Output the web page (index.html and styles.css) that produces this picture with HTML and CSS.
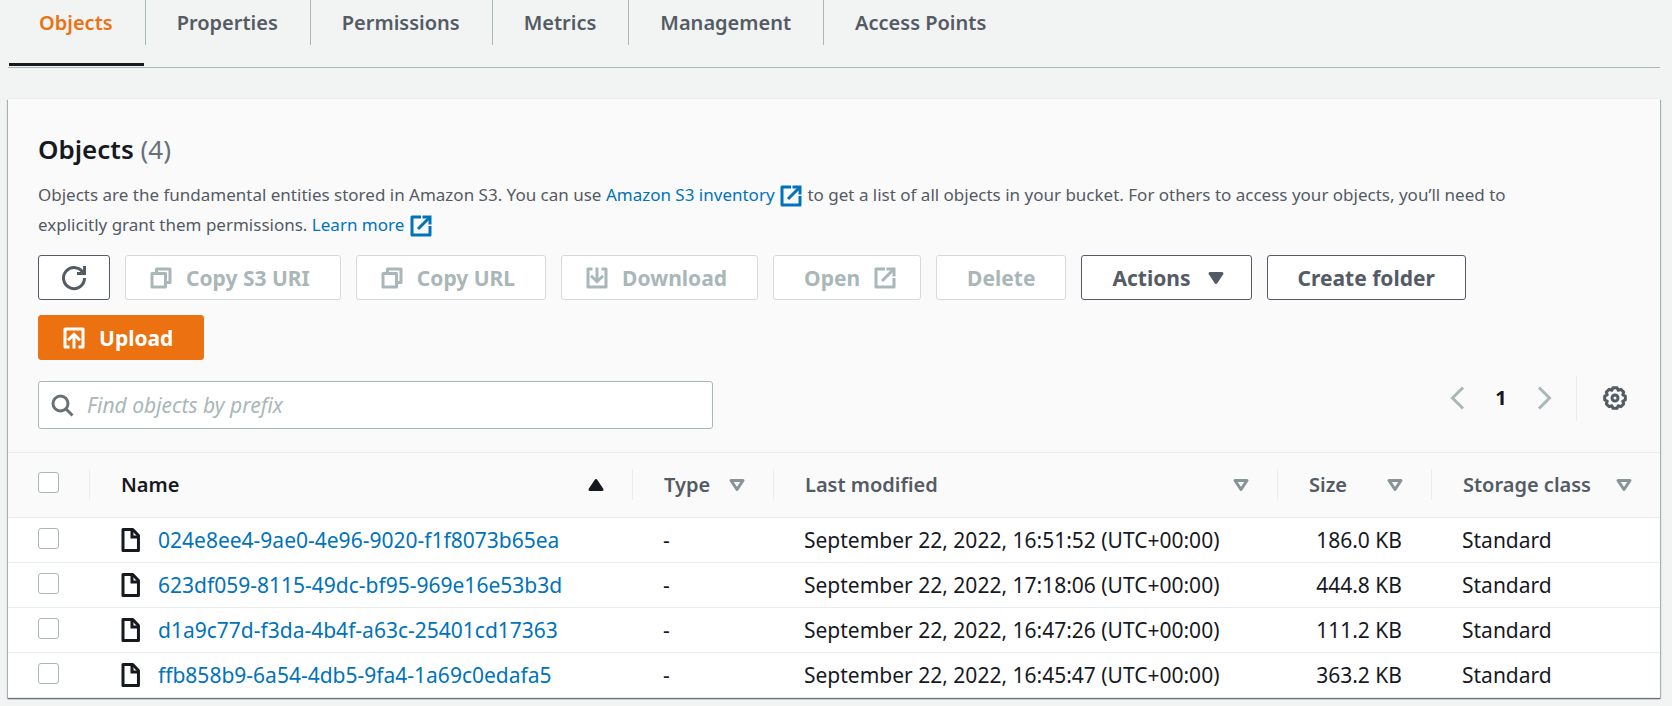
FILE: index.html
```html
<!DOCTYPE html>
<html lang="en">
<head>
<meta charset="utf-8">
<title>Objects</title>
<link rel="stylesheet" href="styles.css">
</head>
<body>
<svg class="sprite" aria-hidden="true">
  <symbol id="external" viewBox="0 0 16 16"><path d="M10 2h4v4" stroke-linecap="square"/><path d="M6 10l8-8"/><path d="M14 9.05V14H2V2h5" stroke-linejoin="round" stroke-linecap="square"/></symbol>
  <symbol id="copy" viewBox="0 0 16 16"><path d="M2 5h9v9H2z" stroke-linejoin="round"/><path d="M5 5V2h9v9h-3" stroke-linejoin="round"/></symbol>
  <symbol id="file" viewBox="0 0 16 16"><path d="M2 1h6.500L12.300 5V15H2z" stroke-linejoin="round"/><path d="M8 1v5h4.500"/></symbol>
  <symbol id="hollow" viewBox="0 0 16 16"><path d="M4 5h8l-4 6z" stroke-linejoin="round"/></symbol>
</svg>

<nav class="tabs" aria-label="Bucket">
  <a class="tab tab-active" href="#objects" aria-current="page"><span>Objects</span></a>
  <a class="tab" href="#properties"><span>Properties</span></a>
  <a class="tab" href="#permissions"><span>Permissions</span></a>
  <a class="tab" href="#metrics"><span>Metrics</span></a>
  <a class="tab" href="#management"><span>Management</span></a>
  <a class="tab" href="#access-points"><span>Access Points</span></a>
</nav>

<main class="card">
  <header class="card-header">
    <h2 class="title">Objects <span class="count">(4)</span></h2>
    <p class="description">Objects are the fundamental entities stored in Amazon S3. You can use <a href="#inventory">Amazon S3 inventory <svg class="icon"><use href="#external"/></svg></a> to get a list of all objects in your bucket. For others to access your objects, you’ll need to explicitly grant them permissions. <a href="#learn">Learn more <svg class="icon"><use href="#external"/></svg></a></p>
    <div class="actions">
      <button class="button button-icon" type="button" aria-label="Refresh"><svg class="icon" viewBox="0 0 16 16"><path d="M10 5h5V0"/><path d="M15 8a7 7 0 1 1-.7-3"/></svg></button>
      <button class="button" type="button" disabled><svg class="icon"><use href="#copy"/></svg>Copy S3 URI</button>
      <button class="button" type="button" disabled><svg class="icon"><use href="#copy"/></svg>Copy URL</button>
      <button class="button" type="button" disabled><svg class="icon" viewBox="0 0 16 16"><path d="M4 2H2v12h12V2h-2" stroke-linejoin="round" stroke-linecap="square"/><path d="M8 1v9M4 6.5l4 4 4-4"/></svg>Download</button>
      <button class="button" type="button" disabled>Open<svg class="icon icon-end"><use href="#external"/></svg></button>
      <button class="button" type="button" disabled>Delete</button>
      <button class="button" type="button">Actions<svg class="icon icon-end icon-solid" viewBox="0 0 16 16"><path d="M4 5h8l-4 6z" stroke-linejoin="round"/></svg></button>
      <button class="button" type="button">Create folder</button>
      <button class="button button-primary" type="button"><svg class="icon" viewBox="0 0 16 16"><path d="M5 14H2V2h12v12h-3" stroke-linejoin="round"/><path d="M8 15V6M4 9.500l4-4 4 4"/></svg>Upload</button>
    </div>
    <div class="tools">
      <label class="search">
        <svg class="icon" viewBox="0 0 16 16"><circle cx="7" cy="7" r="5"/><path d="M15 15l-4.500-4.500"/></svg>
        <input type="search" placeholder="Find objects by prefix" aria-label="Find objects by prefix">
      </label>
      <div class="pager">
        <button class="pager-button" type="button" disabled aria-label="Previous page"><svg class="icon" viewBox="0 0 16 16"><path d="M12 1L5 8l7 7"/></svg></button>
        <button class="pager-button page" type="button" aria-current="page">1</button>
        <button class="pager-button" type="button" disabled aria-label="Next page"><svg class="icon" viewBox="0 0 16 16"><path d="M4 1l7 7-7 7"/></svg></button>
        <div class="settings">
          <button class="pager-button gear" type="button" aria-label="Preferences"><svg class="icon" viewBox="0 0 16 16"><path d="M14.870 6.660V9.340L13.170 10.140L13.800 11.910L11.910 13.800L10.140 13.170L9.340 14.870H6.660L5.860 13.170L4.090 13.800L2.200 11.910L2.830 10.140L1.130 9.340V6.660L2.830 5.860L2.200 4.090L4.090 2.200L5.860 2.830L6.660 1.130H9.340L10.140 2.830L11.910 2.200L13.800 4.090L13.170 5.860z" stroke-linejoin="round"/><circle cx="8" cy="8" r="2"/></svg></button>
        </div>
      </div>
    </div>
  </header>

  <table class="objects">
    <colgroup><col class="col-check"><col><col class="col-type"><col class="col-date"><col class="col-size"><col class="col-class"></colgroup>
    <thead>
      <tr>
        <th scope="col"><div class="head head-check"><input type="checkbox" aria-label="Select all objects"></div></th>
        <th scope="col" class="sorted" aria-sort="ascending"><div class="head">Name<svg class="icon icon-solid" viewBox="0 0 16 16"><path d="M4 11h8L8 5z" stroke-linejoin="round"/></svg></div></th>
        <th scope="col"><div class="head">Type<svg class="icon"><use href="#hollow"/></svg></div></th>
        <th scope="col"><div class="head">Last modified<svg class="icon"><use href="#hollow"/></svg></div></th>
        <th scope="col"><div class="head">Size<svg class="icon"><use href="#hollow"/></svg></div></th>
        <th scope="col"><div class="head">Storage class<svg class="icon"><use href="#hollow"/></svg></div></th>
      </tr>
    </thead>
    <tbody>
      <tr>
        <td class="check"><input type="checkbox" aria-label="Select 024e8ee4-9ae0-4e96-9020-f1f8073b65ea"></td>
        <td><div class="name"><svg class="icon"><use href="#file"/></svg><a href="#o1">024e8ee4-9ae0-4e96-9020-f1f8073b65ea</a></div></td>
        <td>-</td><td>September 22, 2022, 16:51:52 (UTC+00:00)</td><td class="size">186.0 KB</td><td>Standard</td>
      </tr>
      <tr>
        <td class="check"><input type="checkbox" aria-label="Select 623df059-8115-49dc-bf95-969e16e53b3d"></td>
        <td><div class="name"><svg class="icon"><use href="#file"/></svg><a href="#o2">623df059-8115-49dc-bf95-969e16e53b3d</a></div></td>
        <td>-</td><td>September 22, 2022, 17:18:06 (UTC+00:00)</td><td class="size">444.8 KB</td><td>Standard</td>
      </tr>
      <tr>
        <td class="check"><input type="checkbox" aria-label="Select d1a9c77d-f3da-4b4f-a63c-25401cd17363"></td>
        <td><div class="name"><svg class="icon"><use href="#file"/></svg><a href="#o3">d1a9c77d-f3da-4b4f-a63c-25401cd17363</a></div></td>
        <td>-</td><td>September 22, 2022, 16:47:26 (UTC+00:00)</td><td class="size">111.2 KB</td><td>Standard</td>
      </tr>
      <tr>
        <td class="check"><input type="checkbox" aria-label="Select ffb858b9-6a54-4db5-9fa4-1a69c0edafa5"></td>
        <td><div class="name"><svg class="icon"><use href="#file"/></svg><a href="#o4">ffb858b9-6a54-4db5-9fa4-1a69c0edafa5</a></div></td>
        <td>-</td><td>September 22, 2022, 16:45:47 (UTC+00:00)</td><td class="size">363.2 KB</td><td>Standard</td>
      </tr>
    </tbody>
  </table>
</main>
</body>
</html>
```
FILE: styles.css
```css
* {
  box-sizing: border-box;
}

body {
  margin: 0;
  padding: 0 12px 8px 8px;
  background: #f2f3f3;
  color: #16191f;
  font-family: "Noto Sans", "Open Sans", sans-serif;
  font-size: 21px;
  line-height: 30px;
}

a {
  color: #0073bb;
  text-decoration: none;
}

button,
input {
  font: inherit;
  color: inherit;
}

.sprite {
  display: none;
}

.icon {
  flex: none;
  width: 24px;
  height: 24px;
  overflow: visible;
  fill: none;
  stroke: currentColor;
  stroke-width: 2;
}

.icon-solid {
  fill: currentColor;
}

/* Tabs */
.tabs {
  display: flex;
  height: 68px;
  border-bottom: 1px solid #aab7b8;
}

.tab {
  height: 67px;
  color: #545b64;
  font-size: 20px;
  font-weight: 600;
}

.tab span {
  display: block;
  height: 45px;
  padding: 8px 32px 0 31px;
  border-right: 1px solid #aab7b8;
}

.tab:last-child span {
  border-right: 0;
}

.tab-active {
  color: #ec7211;
  background: linear-gradient(#16191f, #16191f) 1px 63px / calc(100% - 3px) 3px no-repeat;
}

/* Card */
.card {
  margin-top: 31px;
  background: #fff;
  box-shadow: 0 1px 1px 0 #687078, 1px 1px 1px 0 #b4bcbd, -1px 1px 1px 0 #b4bcbd, 0 -1px 0 0 #eaeded;
}

.card-header {
  padding: 30px 30px 23px;
  background: #fafafa;
  border-bottom: 1px solid #eaeded;
}

.title {
  margin: 0;
  font-size: 26px;
  font-weight: 600;
  line-height: 40px;
}

.count {
  color: #687078;
  font-weight: 400;
}

.description {
  max-width: 1540px;
  margin: 11px 0 15px;
  color: #545b64;
  font-size: 17px;
}

.description .icon {
  vertical-align: middle;
}

.actions {
  display: flex;
  flex-wrap: wrap;
  gap: 15px;
  max-width: 1480px;
}

.button {
  display: flex;
  align-items: center;
  height: 45px;
  padding: 0 30px;
  border: 1px solid #545b64;
  border-radius: 3px;
  background: #fff;
  color: #545b64;
  font-weight: 700;
}

.button .icon {
  margin: 0 13px 0 -7px;
}

.button .icon-end {
  margin: 0 -7px 0 13px;
}

.button-icon {
  padding: 0 23px;
}

.button-icon .icon {
  margin: 0;
}

.button:disabled {
  border-color: #d5dbdb;
  color: #aab7b8;
}

.button-primary {
  border-color: #ec7211;
  background: #ec7211;
  color: #fff;
}

.tools {
  display: flex;
  justify-content: space-between;
  align-items: flex-start;
  margin-top: 21px;
}

.search {
  display: flex;
  align-items: center;
  gap: 13px;
  width: 42.4%;
  height: 48px;
  padding: 0 11px;
  border: 1px solid #aab7b8;
  border-radius: 3px;
  background: #fff;
  color: #687078;
}

.search input {
  flex: 1;
  min-width: 0;
  padding: 0;
  border: 0;
  outline: 0;
  background: none;
}

.search input::placeholder {
  color: #aab7b8;
  font-style: italic;
  opacity: 1;
}

.pager {
  display: flex;
  align-items: center;
  height: 34px;
}

.pager-button {
  display: flex;
  justify-content: center;
  width: 44px;
  padding: 0;
  border: 0;
  background: none;
  color: #545b64;
}

.pager-button:disabled {
  color: #aab7b8;
}

.page {
  color: #16191f;
  font-size: 20px;
  font-weight: 700;
}

.settings {
  display: flex;
  align-items: center;
  height: 45px;
  margin-left: 9px;
  padding-left: 23px;
  border-left: 1px solid #eaeded;
}

.gear {
  width: 30px;
}

/* Table */
.objects {
  width: 100%;
  table-layout: fixed;
  border-collapse: collapse;
}

.col-check {
  width: 82px;
}

.col-type {
  width: 141px;
}

.col-date {
  width: 504px;
}

.col-size {
  width: 154px;
}

.col-class {
  width: 228px;
}

th {
  height: 64px;
  padding: 0;
  background: #fafafa;
  color: #545b64;
  font-size: 20px;
  font-weight: 600;
  text-align: left;
  border-bottom: 1px solid #eaeded;
}

.sorted {
  color: #16191f;
}

.head {
  display: flex;
  align-items: center;
  justify-content: space-between;
  height: 31px;
  padding: 0 24px 0 31px;
  border-right: 1px solid #eaeded;
}

th:last-child .head {
  border-right: 0;
}

th:not(.sorted) .icon {
  color: #879596;
}

.head-check {
  padding: 0 30px 4px;
}

td {
  height: 45px;
  padding: 0 30px;
  border-bottom: 1px solid #eaeded;
  white-space: nowrap;
}

td.size {
  text-align: right;
}

.check {
  padding-bottom: 2px;
}

.check input,
.head-check input {
  appearance: none;
  display: block;
  width: 21px;
  height: 21px;
  margin: 0;
  border: 1px solid #aab7b8;
  border-radius: 3px;
  background: #fff;
}

.name {
  display: flex;
  align-items: center;
  gap: 14px;
}
```
